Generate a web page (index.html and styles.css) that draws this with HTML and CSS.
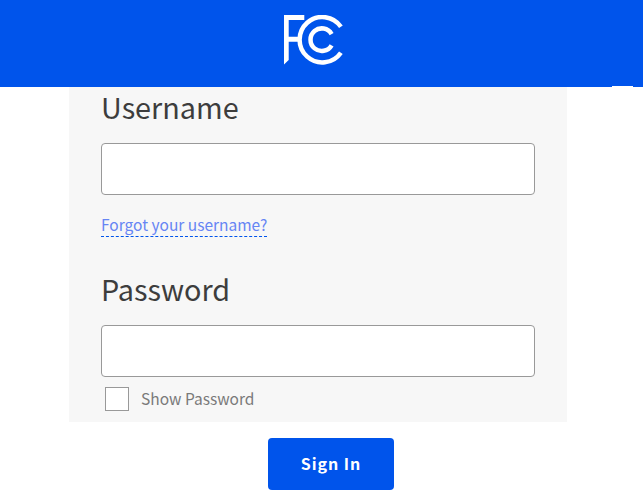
FILE: index.html
```html
<!DOCTYPE html>
<html lang="en">
<head>
  <meta charset="UTF-8" />
  <title>FCC Sign In</title>
  <link rel="stylesheet" href="styles.css">
</head>
<body>

  <header class="site-header">
    <svg class="fcc-logo" width="60" height="50" viewBox="0 0 60 50" role="img" aria-label="FCC">
      <path class="logo-f" d="M0 0H20.3V5H4.7V21.7H14V26.7H4.7V45L0 49.5Z" />
      <path d="M56.9 11.7A22.7 22.7 0 1 0 56.9 37.7" />
      <path d="M47.6 19.05A11.3 11.3 0 1 0 47.6 30.35" />
    </svg>
    <span class="header-notch"></span>
  </header>

  <main class="login-panel">
    <label class="field-label" for="username">Username</label>
    <input class="text-input" type="text" id="username" />
    <a class="forgot-link" href="#">Forgot your username?</a>

    <label class="field-label password-label" for="password">Password</label>
    <input class="text-input" type="password" id="password" />
    <div class="show-password">
      <span class="checkbox"></span>
      <span class="show-password-text">Show Password</span>
    </div>
  </main>

  <div class="actions">
    <button class="sign-in" type="button">Sign In</button>
  </div>

</body>
</html>
```

FILE: styles.css
```css
* {
  box-sizing: border-box;
}

body {
  margin: 0;
  background-color: #fff;
  font-family: "Noto Sans CJK SC", "Noto Sans", sans-serif;
  color: #3d3d3d;
  overflow: hidden;
}

.site-header {
  position: relative;
  display: flex;
  justify-content: center;
  height: 87px;
  padding: 15px 15px 0 0;
  background-color: #0054eb;
}

.fcc-logo {
  display: block;
}

.fcc-logo path {
  fill: none;
  stroke: #fff;
  stroke-width: 4.5;
}

.fcc-logo .logo-f {
  fill: #fff;
  stroke: none;
}

.header-notch {
  position: absolute;
  left: 612px;
  bottom: 0;
  width: 21px;
  height: 1px;
  background-color: #fff;
}

.login-panel {
  display: flex;
  flex-direction: column;
  align-items: flex-start;
  width: 498px;
  height: 335px;
  margin-left: 69px;
  padding: 0 32px;
  background-color: #f7f7f7;
}

.field-label {
  height: 56px;
  font-size: 28.8px;
  line-height: 39px;
}

.password-label {
  margin-top: 32px;
}

.text-input {
  width: 434px;
  height: 52px;
  background-color: #fff;
  border: 1px solid #999;
  border-radius: 4px;
}

.forgot-link {
  margin-top: 18px;
  padding-bottom: 1px;
  font-size: 15.5px;
  line-height: 22px;
  color: #6685f4;
  text-decoration: none;
  border-bottom: 1px dashed #0054eb;
}

.show-password {
  display: flex;
  align-items: center;
  gap: 12px;
  margin: 10px 0 0 4px;
  font-size: 15.5px;
  line-height: 22px;
  color: #7a7a7a;
}

.show-password-text {
  padding-bottom: 2px;
}

.checkbox {
  width: 24px;
  height: 24px;
  background-color: #fff;
  border: 1px solid #999;
}

.actions {
  display: flex;
  justify-content: center;
  margin-top: 16px;
  padding-left: 19px;
}

.sign-in {
  width: 126px;
  height: 52px;
  padding-bottom: 4px;
  background-color: #0054eb;
  color: #fff;
  border: none;
  border-radius: 4px;
  font-family: inherit;
  font-size: 16px;
  font-weight: 700;
  letter-spacing: 0.95px;
}
```
